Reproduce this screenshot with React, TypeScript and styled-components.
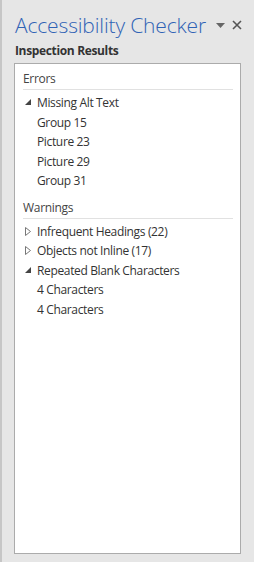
import React from "react";
import styled, { createGlobalStyle } from "styled-components";

const GlobalStyle = createGlobalStyle`
  html, body {
    margin: 0;
    padding: 0;
    background: #e6e6e6;
  }
  body {
    font-family: "Open Sans", "Noto Sans", "Liberation Sans", sans-serif;
  }
`;

const Pane = styled.div`
  width: 254px;
  height: 562px;
  box-sizing: border-box;
  display: flex;
  flex-direction: column;
  background: #e6e6e6;
  border-left: 2px solid #c6c6c6;
  padding: 0 13px 8px 12px;
`;

const TitleBar = styled.div`
  display: flex;
  align-items: center;
  height: 44px;
  padding-top: 6px;
  box-sizing: border-box;
`;

const Title = styled.div`
  flex: 1;
  font-family: "Open Sans", "Noto Sans", sans-serif;
  font-weight: 300;
  font-size: 21px;
  letter-spacing: -0.15px;
  color: #2f62b5;
  white-space: nowrap;
  margin-left: 1px;
`;

const IconButton = styled.div<{ $last?: boolean }>`
  display: flex;
  align-items: center;
  justify-content: center;
  width: 14px;
  height: 14px;
  margin-left: 3px;
  margin-right: ${({ $last }) => ($last ? "-3px" : "0")};
`;

const SubTitle = styled.div`
  font-size: 12px;
  font-weight: 700;
  color: #333;
  letter-spacing: -0.35px;
  margin: -2px 0 0 1px;
  height: 19px;
`;

const ResultsBox = styled.div`
  flex: 1;
  margin-top: 2px;
  background: #fff;
  border: 1px solid #ababab;
  padding: 4px 7px 0 8px;
`;

const SectionHeader = styled.div`
  font-size: 12px;
  color: #444;
  letter-spacing: -0.3px;
  height: 21px;
  line-height: 21px;
  border-bottom: 1px solid #e1e1e1;
  margin-bottom: 3px;
`;

const Section = styled.div`
  margin-bottom: 6px;
`;

const Row = styled.div<{ $indent?: boolean }>`
  display: flex;
  align-items: center;
  height: 19.5px;
  font-size: 12px;
  letter-spacing: -0.35px;
  color: #333;
  padding-left: ${({ $indent }) => ($indent ? "14px" : "2px")};
  white-space: nowrap;
`;

const Caret = styled.span`
  display: inline-flex;
  width: 12px;
  align-items: center;
`;

const Expanded = () => (
  <svg width="7" height="7" viewBox="0 0 7 7">
    <polygon points="6,0 6,6 0,6" fill="#444" />
  </svg>
);

const Collapsed = () => (
  <svg width="6" height="9" viewBox="0 0 6 9">
    <polygon points="0.5,0.5 5.5,4.5 0.5,8.5" fill="none" stroke="#777" strokeWidth="1" />
  </svg>
);

type Item = { label: string; open?: boolean; children?: string[] };

const errors: Item[] = [
  { label: "Missing Alt Text", open: true, children: ["Group 15", "Picture 23", "Picture 29", "Group 31"] },
];

const warnings: Item[] = [
  { label: "Infrequent Headings (22)", open: false },
  { label: "Objects not Inline (17)", open: false },
  { label: "Repeated Blank Characters", open: true, children: ["4 Characters", "4 Characters"] },
];

const Tree = ({ items }: { items: Item[] }) => (
  <>
    {items.map((item) => (
      <React.Fragment key={item.label}>
        <Row>
          <Caret>{item.open ? <Expanded /> : <Collapsed />}</Caret>
          {item.label}
        </Row>
        {item.open &&
          item.children?.map((c, i) => (
            <Row $indent key={i}>
              {c}
            </Row>
          ))}
      </React.Fragment>
    ))}
  </>
);

export default function App() {
  return (
    <>
      <GlobalStyle />
      <Pane>
        <TitleBar>
          <Title>Accessibility Checker</Title>
          <IconButton>
            <svg width="9" height="5" viewBox="0 0 9 5">
              <polygon points="0,0 9,0 4.5,5" fill="#666" />
            </svg>
          </IconButton>
          <IconButton $last>
            <svg width="10" height="10" viewBox="0 0 10 10">
              <path d="M1 1 L9 9 M9 1 L1 9" stroke="#555" strokeWidth="1.6" />
            </svg>
          </IconButton>
        </TitleBar>
        <SubTitle>Inspection Results</SubTitle>
        <ResultsBox>
          <Section>
            <SectionHeader>Errors</SectionHeader>
            <Tree items={errors} />
          </Section>
          <Section>
            <SectionHeader>Warnings</SectionHeader>
            <Tree items={warnings} />
          </Section>
        </ResultsBox>
      </Pane>
    </>
  );
}
